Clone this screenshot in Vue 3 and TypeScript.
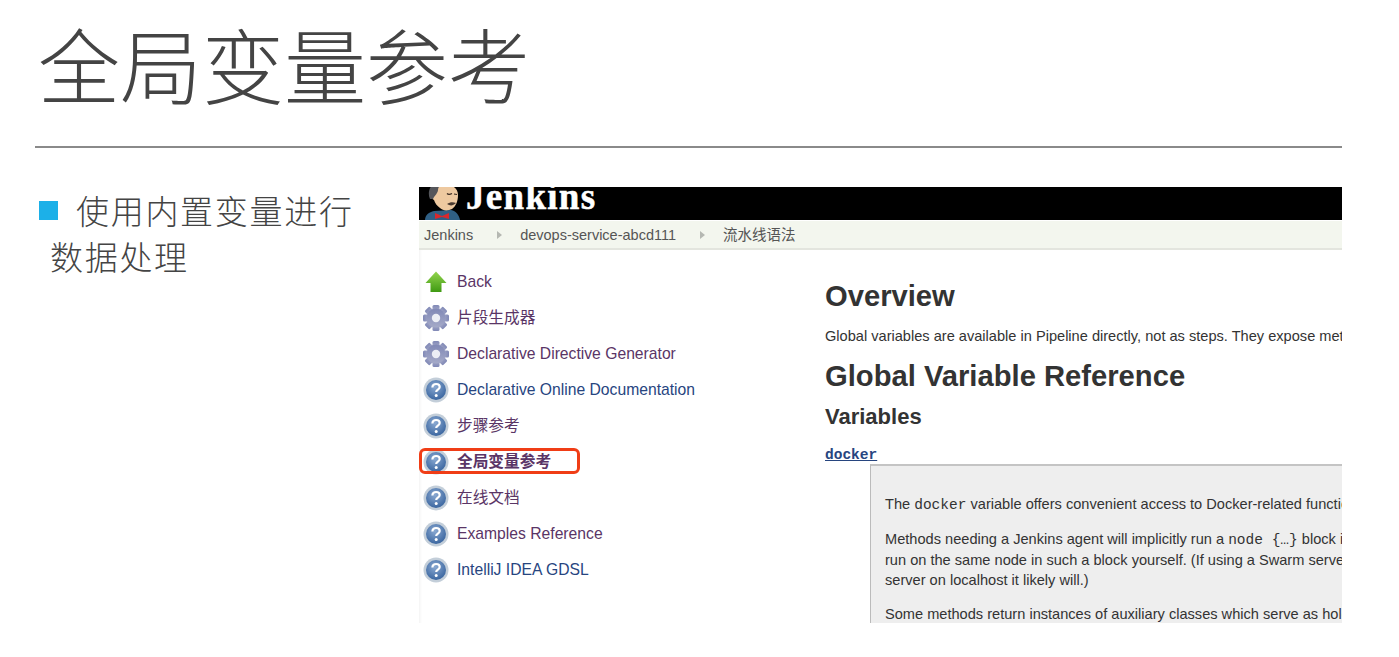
<script setup lang="ts">
type NavItem = {
  label: string
  icon: 'back' | 'gear' | 'help'
  tone: 'visited' | 'link'
  active?: boolean
}

const navItems: NavItem[] = [
  { label: 'Back', icon: 'back', tone: 'visited' },
  { label: '片段生成器', icon: 'gear', tone: 'visited' },
  { label: 'Declarative Directive Generator', icon: 'gear', tone: 'visited' },
  { label: 'Declarative Online Documentation', icon: 'help', tone: 'link' },
  { label: '步骤参考', icon: 'help', tone: 'visited' },
  { label: '全局变量参考', icon: 'help', tone: 'visited', active: true },
  { label: '在线文档', icon: 'help', tone: 'visited' },
  { label: 'Examples Reference', icon: 'help', tone: 'visited' },
  { label: 'IntelliJ IDEA GDSL', icon: 'help', tone: 'link' }
]

// gear teeth, drawn as rotated copies of one rect
const teeth = [0, 45, 90, 135, 180, 225, 270, 315]
</script>

<template>
  <div class="slide">
    <header class="slide-head">
      <h1>全局变量参考</h1>
    </header>

    <div class="slide-body">
      <div class="bullets">
        <p class="bullet"><span class="square"></span><span>使用内置变量进行</span></p>
        <p class="bullet-cont">数据处理</p>
      </div>

      <div class="shot">
        <svg class="defs" width="0" height="0">
          <defs>
            <linearGradient id="arrowFill" x1="0" y1="0" x2="0" y2="1">
              <stop offset="0" stop-color="#93d44e" />
              <stop offset="1" stop-color="#3f9a12" />
            </linearGradient>
            <radialGradient id="helpFill" cx="0.45" cy="0.35" r="0.75">
              <stop offset="0" stop-color="#8aa9d2" />
              <stop offset="1" stop-color="#2f5c98" />
            </radialGradient>
            <linearGradient id="gearFill" x1="0" y1="0" x2="0" y2="1">
              <stop offset="0" stop-color="#8088b6" />
              <stop offset="1" stop-color="#a5aac8" />
            </linearGradient>
          </defs>
        </svg>

        <div class="topbar">
          <svg class="butler" viewBox="0 0 40 33" width="40" height="33">
            <path d="M1 33c0-5 4-8 9-9l17-1c5 1 8 5 9 10z" fill="#2f5f84" />
            <path d="M7 6C8 0 14-3 20-3s14 3 14 11c0 6-2 11-6 14-4 2-9 2-12-1-3-2-5-5-6-8-3-1-4-5-3-7z" fill="#eec9a0" />
            <path d="M6 12C3 6 6-3 12-4l8 1c-4 1-6 3-6 6 0 3-3 5-5 9z" fill="#55565b" />
            <path d="M23 6.500c1 1 3 1 5 0M30 7l3 .5" stroke="#3a2a20" stroke-width="1.2" fill="none" />
            <path d="M23 17c3-2 6-2 9-1-3 3-6 3-9 1z" fill="#4a3a30" />
            <path d="M11 26l7 3 7-3v6l-7-2-7 2z" fill="#d8282c" />
          </svg>
          <span class="brand">Jenkins</span>
        </div>

        <nav class="crumbs">
          <span>Jenkins</span>
          <i class="caret"></i>
          <span>devops-service-abcd111</span>
          <i class="caret"></i>
          <span>流水线语法</span>
        </nav>

        <div class="columns">
          <aside class="side">
            <a
              v-for="item in navItems"
              :key="item.label"
              class="side-item"
              :class="[item.tone, { active: item.active }]"
            >
              <svg class="ico" viewBox="0 0 28 28" width="28" height="28">
                <template v-if="item.icon === 'back'">
                  <path d="M14 3.500 L24.500 15 H19.500 V24 H8.500 V15 H3.500 Z" fill="url(#arrowFill)" />
                </template>
                <template v-else-if="item.icon === 'gear'">
                  <rect
                    v-for="a in teeth"
                    :key="a"
                    x="10.5"
                    y="1"
                    width="7"
                    height="6"
                    rx="1.5"
                    fill="url(#gearFill)"
                    :transform="`rotate(${a} 14 14)`"
                  />
                  <circle cx="14" cy="14" r="9.5" fill="url(#gearFill)" />
                  <circle cx="14" cy="14" r="4.2" fill="#eceef5" />
                </template>
                <template v-else>
                  <circle cx="14" cy="14" r="12.5" fill="#c3ced9" />
                  <circle cx="14" cy="14" r="10" fill="url(#helpFill)" />
                  <path
                    d="M10.4 11.4c0-2.2 1.6-3.4 3.7-3.4s3.6 1.2 3.6 3c0 2.6-3.5 2.6-3.5 5"
                    fill="none"
                    stroke="#fff"
                    stroke-width="2.2"
                  />
                  <circle cx="14.2" cy="19.4" r="1.5" fill="#fff" />
                </template>
              </svg>
              <span>{{ item.label }}</span>
            </a>
          </aside>

          <main class="content">
            <h2>Overview</h2>
            <p class="lead">Global variables are available in Pipeline directly, not as steps. They expose methods and variables to be accessed within your Pipeline script.</p>
            <h2 class="ref">Global Variable Reference</h2>
            <h3>Variables</h3>
            <a class="var-link">docker</a>
            <div class="doc-box">
              <p>The <code>docker</code> variable offers convenient access to Docker-related functions from a Pipeline script.</p>
              <p>Methods needing a Jenkins agent will implicitly run a <code>node {…}</code> block if you have not wrapped them in one. It is a good idea to<br />run on the same node in such a block yourself. (If using a Swarm server, or any other specific Docker server, this probably does not matter; if the<br />server on localhost it likely will.)</p>
              <p>Some methods return instances of auxiliary classes which serve as holders for an ID and which have their own methods.</p>
            </div>
          </main>
        </div>
      </div>
    </div>
  </div>
</template>

<style scoped>
.slide {
  width: 1399px;
  height: 657px;
  overflow: hidden;
  background: #fff;
  font-family: "Noto Sans CJK SC", "Liberation Sans", sans-serif;
}

.slide-head {
  margin: 0 57px 0 35px;
  height: 146px;
  border-bottom: 2px solid #8a8a8a;
}

h1 {
  margin: 0;
  padding: 13px 0 0 3px;
  font-size: 82px;
  line-height: 100px;
  font-weight: 300;
  color: #444;
}

.slide-body {
  display: flex;
  padding: 39px 57px 0 39px;
}

.bullets {
  width: 380px;
  flex: none;
  color: #444;
  font-size: 33px;
  font-weight: 300;
  letter-spacing: 1.7px;
  line-height: 46px;
}

.bullet {
  margin: 0;
  display: flex;
  align-items: center;
}

.bullet-cont {
  margin: 0 0 0 11px;
}

.square {
  width: 19px;
  height: 19px;
  margin-right: 18px;
  background: #1cb0e8;
}

.shot {
  width: 923px;
  height: 436px;
  overflow: hidden;
  font-family: "Liberation Sans", "Noto Sans CJK SC", sans-serif;
}

.defs {
  position: absolute;
}

.topbar {
  height: 33px;
  background: #000;
  display: flex;
  align-items: flex-end;
  overflow: hidden;
  padding-left: 5px;
}

.butler {
  flex: none;
}

.brand {
  margin-left: 2px;
  font-family: "Liberation Serif", serif;
  font-size: 37px;
  font-weight: 700;
  line-height: 33px;
  color: #fff;
  letter-spacing: 1.3px;
  -webkit-text-stroke: 0.5px #fff;
  transform: translateY(-7px);
}

.crumbs {
  height: 27px;
  margin-top: 1px;
  background: #f3f6ee;
  border-bottom: 2px solid #e3e5de;
  display: flex;
  align-items: center;
  padding-left: 5px;
  font-size: 14.5px;
  line-height: 20px;
  color: #555;
}

.caret {
  width: 0;
  height: 0;
  margin: 0 18px 0 24px;
  border-left: 5px solid #b5b8b2;
  border-top: 4px solid transparent;
  border-bottom: 4px solid transparent;
}

.columns {
  display: flex;
}

.side {
  width: 406px;
  flex: none;
  padding-top: 14px;
  box-shadow: inset 3px 0 3px -2px #f1f1f1;
}

.side-item {
  position: relative;
  height: 36px;
  display: flex;
  align-items: center;
  gap: 7px;
  padding-left: 3px;
  font-size: 15.7px;
  line-height: 20px;
}

.side-item.visited {
  color: #5a3566;
}

.side-item.link {
  color: #27457f;
}

.side-item.active {
  font-weight: 700;
}

.side-item.active::after {
  content: "";
  position: absolute;
  left: 0;
  top: 4px;
  width: 161px;
  height: 26px;
  border: 3px solid #f03d16;
  border-radius: 6px;
  box-sizing: border-box;
}

.ico {
  flex: none;
}

.content {
  flex: 1;
  min-width: 0;
  color: #333;
  white-space: nowrap;
}

h2 {
  margin: 0;
  font-size: 29.2px;
  line-height: 36px;
  font-weight: 700;
  color: #333;
  padding-top: 28px;
}

.lead {
  margin: 12px 0 0;
  font-size: 14.6px;
  line-height: 20px;
}

h2.ref {
  padding-top: 0;
  margin-top: 12px;
}

h3 {
  margin: 9px 0 0;
  font-size: 22px;
  line-height: 28px;
  color: #333;
}

.var-link {
  display: block;
  margin-top: 15px;
  font-family: "Liberation Mono", monospace;
  font-size: 14.5px;
  line-height: 18px;
  font-weight: 700;
  color: #27457f;
  text-decoration: underline;
}

.doc-box {
  margin: 0 0 0 45px;
  padding: 28px 0 0 14px;
  background: #eee;
  border-left: 1px solid #bbb;
  border-top: 2px solid #c4c4c4;
  font-size: 14.6px;
  line-height: 20px;
}

.doc-box p {
  margin: 0 0 14px;
}

code {
  font-family: "Liberation Mono", monospace;
  font-size: 14.5px;
}
</style>

<style>
html,
body {
  margin: 0;
  background: #fff;
}
</style>
